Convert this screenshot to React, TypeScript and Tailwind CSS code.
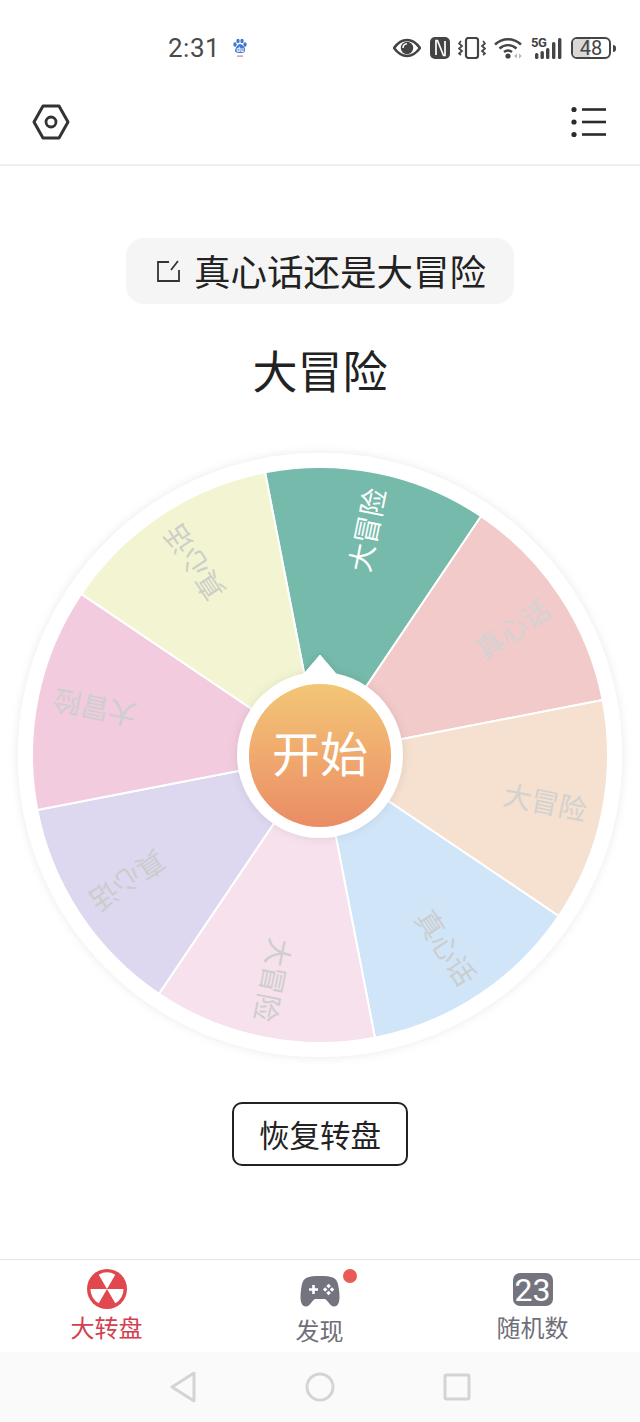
const CX = 320;
const CY = 320;
const R = 288;

const slices = [
  { color: "#75baab", label: "大冒险", text: "#ffffff" },
  { color: "#f2caca", label: "真心话", text: "#d3d3d3" },
  { color: "#f6e0cf", label: "大冒险", text: "#d2d2cf" },
  { color: "#d0e5f8", label: "真心话", text: "#cccdcf" },
  { color: "#f6e1ec", label: "大冒险", text: "#cecece" },
  { color: "#ddd8f0", label: "真心话", text: "#cccccc" },
  { color: "#f2cbde", label: "大冒险", text: "#cecece" },
  { color: "#f3f5d2", label: "真心话", text: "#cecec9" },
];

const polar = (deg: number, r: number) => {
  const a = ((deg - 90) * Math.PI) / 180;
  return [CX + r * Math.cos(a), CY + r * Math.sin(a)];
};

const slicePath = (from: number, to: number) => {
  const [x1, y1] = polar(from, R);
  const [x2, y2] = polar(to, R);
  return `M${CX} ${CY}L${x1} ${y1}A${R} ${R} 0 0 1 ${x2} ${y2}Z`;
};

function Wheel() {
  return (
    <div className="relative h-[640px] w-[640px]">
      <svg width="640" height="640" viewBox="0 0 640 640" className="block">
        <defs>
          <filter id="wheelShadow" x="-10%" y="-10%" width="120%" height="120%">
            <feDropShadow dx="0" dy="0" stdDeviation="5" floodColor="#000" floodOpacity="0.09" />
          </filter>
        </defs>
        <circle cx={CX} cy={CY} r="302" fill="#fff" filter="url(#wheelShadow)" />
        {slices.map((s, i) => {
          const from = -11 + i * 45;
          return (
            <path key={i} d={slicePath(from, from + 45)} fill={s.color} stroke="#fff" strokeWidth="2" strokeLinejoin="round" />
          );
        })}
        {slices.map((s, i) => {
          const mid = 11.5 + i * 45;
          const [x, y] = polar(mid, 230);
          return (
            <text
              key={i}
              x={x}
              y={y}
              fill={s.text}
              fontSize="28"
              textAnchor="middle"
              dominantBaseline="central"
              transform={`rotate(${mid - 90} ${x} ${y})`}
            >
              {s.label}
            </text>
          );
        })}
        {/* hub and pointer */}
        <g filter="url(#wheelShadow)">
          <circle cx={CX} cy={CY} r="83" fill="#fff" />
          <path d="M320 220L303 240L337 240Z" fill="#fff" stroke="#fff" strokeWidth="1" strokeLinejoin="round" />
        </g>
      </svg>
      <div className="absolute left-[249px] top-[249px] flex h-[143px] w-[142px] items-center justify-center rounded-full bg-gradient-to-b from-[#f3c677] to-[#ea8c65] pb-[10px] text-[48px] leading-none text-white">
        开始
      </div>
    </div>
  );
}

function StatusBar() {
  return (
    <div className="relative flex h-[90px] items-center text-[#444]">
      <div className="ml-[168px] mt-[6px] flex items-center">
        <span className="font-['Roboto'] text-[26px] leading-none tracking-[0.5px] text-[#4a4a4a]">2:31</span>
        <svg width="16" height="20" viewBox="0 0 16 20" className="ml-[12px]">
          <g fill="#3f78cf">
            <ellipse cx="3" cy="6.5" rx="1.7" ry="2.2" />
            <ellipse cx="6" cy="3" rx="1.7" ry="2.2" />
            <ellipse cx="10" cy="3" rx="1.7" ry="2.2" />
            <ellipse cx="13" cy="6.5" rx="1.7" ry="2.2" />
            <path d="M8 6c2.5 0 5.5 4 5 6.5S10 15 8 15s-5.5-.3-5-2.5S5.5 6 8 6Z" />
          </g>
          <text x="8" y="13.5" fill="#fff" fontSize="6" fontWeight="700" textAnchor="middle">du</text>
          <rect x="5" y="17.5" width="6" height="1.2" fill="#b98a9a" />
        </svg>
      </div>
      <div className="ml-auto mr-[24px] mt-[6px] flex items-center">
        {/* eye */}
        <svg width="28" height="20" viewBox="0 0 28 20">
          <path d="M1 10C5 4.5 9 2 14 2s9 2.5 13 8c-4 5.5-8 8-13 8S5 15.5 1 10Z" fill="none" stroke="#444" strokeWidth="2.6" strokeLinejoin="round" />
          <circle cx="14" cy="10" r="6.2" fill="#444" />
          <path d="M10 10c0-2.5 1.500-4 4-4.300" fill="none" stroke="#fff" strokeWidth="1.6" />
        </svg>
        {/* nfc */}
        <svg width="20" height="22" viewBox="0 0 20 22" className="ml-[9px]">
          <rect x="0" y="0" width="20" height="22" rx="5" fill="#444" />
          <path d="M6 18V3.5h1.500L13.500 18.500H15V4" fill="none" stroke="#fff" strokeWidth="1.7" />
        </svg>
        {/* vibrate */}
        <svg width="28" height="22" viewBox="0 0 28 22" className="ml-[8px]">
          <rect x="8" y="1" width="12" height="20" rx="2.5" fill="none" stroke="#444" strokeWidth="2.2" />
          <path d="M3 4l-2 2.500 3 2.500-3 2.500 3 2.500-3 2.500 2 1.500M25 4l2 2.500-3 2.500 3 2.500-3 2.500 3 2.500-2 1.500" fill="none" stroke="#444" strokeWidth="1.7" />
        </svg>
        {/* wifi */}
        <svg width="28" height="22" viewBox="0 0 28 22" className="ml-[8px]">
          <path d="M1 7.500C8.500 0.500 19.500 0.500 27 7.500M5.500 11.500C10.500 7 17.500 7 22.500 11.500M10 15c2.500-2 5.500-2 8 0" fill="none" stroke="#444" strokeWidth="2.4" />
          <circle cx="14" cy="19" r="2.6" fill="#444" />
          <path d="M20 19l3-2.500v5ZM28 19l-3-2.500v5Z" fill="#bbb" />
        </svg>
        {/* 5G signal */}
        <div className="relative ml-[9px] h-[22px] w-[31px]">
          <span className="absolute left-0 top-0 font-['Roboto'] text-[13px] font-bold leading-[11px] tracking-[-0.5px] text-[#444]">5G</span>
          <svg width="31" height="22" viewBox="0 0 31 22" className="absolute left-0 top-0">
            <g fill="#444">
              <rect x="4" y="16" width="3.4" height="6" rx="1.5" />
              <rect x="9.5" y="14" width="3.4" height="8" rx="1.5" />
              <rect x="15" y="11" width="3.4" height="11" rx="1.5" />
              <rect x="21" y="5" width="3.4" height="17" rx="1.5" />
              <rect x="27" y="1" width="3.4" height="21" rx="1.5" />
            </g>
          </svg>
        </div>
        {/* battery */}
        <div className="ml-[9px] flex items-center">
          <div className="relative flex h-[22px] w-[40px] items-center justify-center overflow-hidden rounded-[6px] border-2 border-[#444]">
            <div className="absolute inset-y-0 left-0 w-[48%] bg-[#d8d8d8]" />
            <span className="relative font-['Roboto'] text-[20px] leading-none text-[#444]">48</span>
          </div>
          <div className="ml-[2px] h-[7px] w-[3px] rounded-r bg-[#444]" />
        </div>
      </div>
    </div>
  );
}

function TopBar() {
  return (
    <div className="flex h-[76px] items-center justify-between border-b-2 border-[#eeeeee] pb-[10px] pl-[32px] pr-[33px]">
      <svg width="38" height="36" viewBox="0 0 38 36">
        <path d="M11 2h16l9 16-9 16H11L2 18Z" fill="none" stroke="#333" strokeWidth="3" strokeLinejoin="round" />
        <circle cx="19" cy="18" r="5" fill="none" stroke="#333" strokeWidth="2.8" />
      </svg>
      <svg width="36" height="36" viewBox="0 0 36 36">
        <g fill="#2b2b2b">
          <circle cx="3" cy="5.5" r="2.6" />
          <circle cx="3" cy="18" r="2.6" />
          <circle cx="3" cy="30.5" r="2.6" />
          <rect x="11" y="4.2" width="24" height="2.6" />
          <rect x="11" y="16.7" width="24" height="2.6" />
          <rect x="11" y="29.2" width="24" height="2.6" />
        </g>
      </svg>
    </div>
  );
}

function NavItem({ label, color, icon, labelClass }: { label: string; color: string; icon: React.ReactNode; labelClass: string }) {
  return (
    <div className="flex w-[213px] flex-col items-center">
      <div className="h-[40px]">{icon}</div>
      <span className={`text-[24px] leading-none ${labelClass}`} style={{ color }}>
        {label}
      </span>
    </div>
  );
}

export default function App() {
  return (
    <div className="flex h-[1422px] w-[640px] flex-col overflow-hidden bg-white font-['Noto_Sans_CJK_SC',sans-serif]">
      <StatusBar />
      <TopBar />

      <div className="flex flex-1 flex-col items-center">
        <div className="mt-[72px] flex h-[66px] w-[388px] items-center justify-center rounded-[18px] bg-[#f5f5f5] pl-[2px]">
          <svg width="24" height="22" viewBox="0 0 24 22" className="mr-[14px]">
            <path d="M13 2H2v19h21V10M22 1l-7 9" fill="none" stroke="#333" strokeWidth="1.8" />
          </svg>
          <span className="text-[36.5px] leading-none text-[#222]">真心话还是大冒险</span>
        </div>
        <div className="mt-[44px] h-[44px] text-[45px] leading-[44px] text-[#222]">大冒险</div>
        <div className="mt-[43px]">
          <Wheel />
        </div>
        <button className="mt-[27px] flex h-[64px] w-[176px] items-center justify-center rounded-[10px] border-2 border-[#222] text-[30.5px] leading-none text-[#222]">
          恢复转盘
        </button>
      </div>

      <div className="flex h-[93px] items-start border-t border-[#e6e6e6] bg-white pt-[10px]">
        <NavItem
          label="大转盘"
          color="#d1414f"
          labelClass="mt-[5px]"
          icon={
            <svg width="40" height="40" viewBox="0 0 40 40" className="-mt-px">
              <circle cx="20" cy="20" r="20" fill="#e0474f" />
              <path d="M20 20L11.75 5.71A16.5 16.5 0 0 1 28.25 5.71ZM20 20L36.5 20A16.5 16.5 0 0 1 28.25 34.29ZM20 20L11.75 34.29A16.5 16.5 0 0 1 3.5 20Z" fill="#fff" />
            </svg>
          }
        />
        <div className="relative">
          <NavItem
            label="发现"
            color="#6f6f78"
            labelClass="mt-[8px]"
            icon={
              <svg width="40" height="32" viewBox="0 0 40 32" className="mt-[6px]">
                <path d="M9 1c6-1.500 16-1.500 22 0 5 1 7 4 8 13 1 8 1 16.500-5 16.500-4 0-6-6-9-7.500H15c-3 1.500-5 7.500-9 7.500C0 30.500 0 22 1 14 2 5 4 2 9 1Z" fill="#74747f" />
                <path d="M9 13.500h9M13.500 9v9" stroke="#fff" strokeWidth="2.6" />
                <g fill="#fff">
                  <rect x="27" y="8.5" width="3.2" height="3.2" transform="rotate(45 28.6 10.1)" />
                  <rect x="27" y="15.3" width="3.2" height="3.2" transform="rotate(45 28.6 16.9)" />
                  <rect x="23.6" y="11.9" width="3.2" height="3.2" transform="rotate(45 25.2 13.5)" />
                  <rect x="30.4" y="11.9" width="3.2" height="3.2" transform="rotate(45 32 13.5)" />
                </g>
              </svg>
            }
          />
          <div className="absolute left-[130px] top-[-1px] h-[14px] w-[14px] rounded-full bg-[#e85c55]" />
        </div>
        <NavItem
          label="随机数"
          color="#6f6f78"
          labelClass="mt-[5px]"
          icon={
            <div className="mt-[3px] flex h-[33px] w-[40px] items-center justify-center rounded-[7px] bg-[#74747f] font-['Liberation_Sans_Narrow','Roboto',sans-serif] text-[32px] leading-none text-white">
              23
            </div>
          }
        />
      </div>

      <div className="flex h-[70px] items-center justify-center gap-[108px] bg-[#fafafa] pb-[1px]">
        <svg width="28" height="32" viewBox="0 0 28 32">
          <path d="M25 2L3 16l22 14Z" fill="none" stroke="#d4d4d4" strokeWidth="3" strokeLinejoin="round" />
        </svg>
        <svg width="30" height="30" viewBox="0 0 30 30">
          <circle cx="15" cy="15" r="13" fill="none" stroke="#d4d4d4" strokeWidth="3" />
        </svg>
        <svg width="28" height="28" viewBox="0 0 28 28">
          <rect x="2" y="2" width="24" height="24" rx="1.5" fill="none" stroke="#d4d4d4" strokeWidth="3" />
        </svg>
      </div>
    </div>
  );
}
